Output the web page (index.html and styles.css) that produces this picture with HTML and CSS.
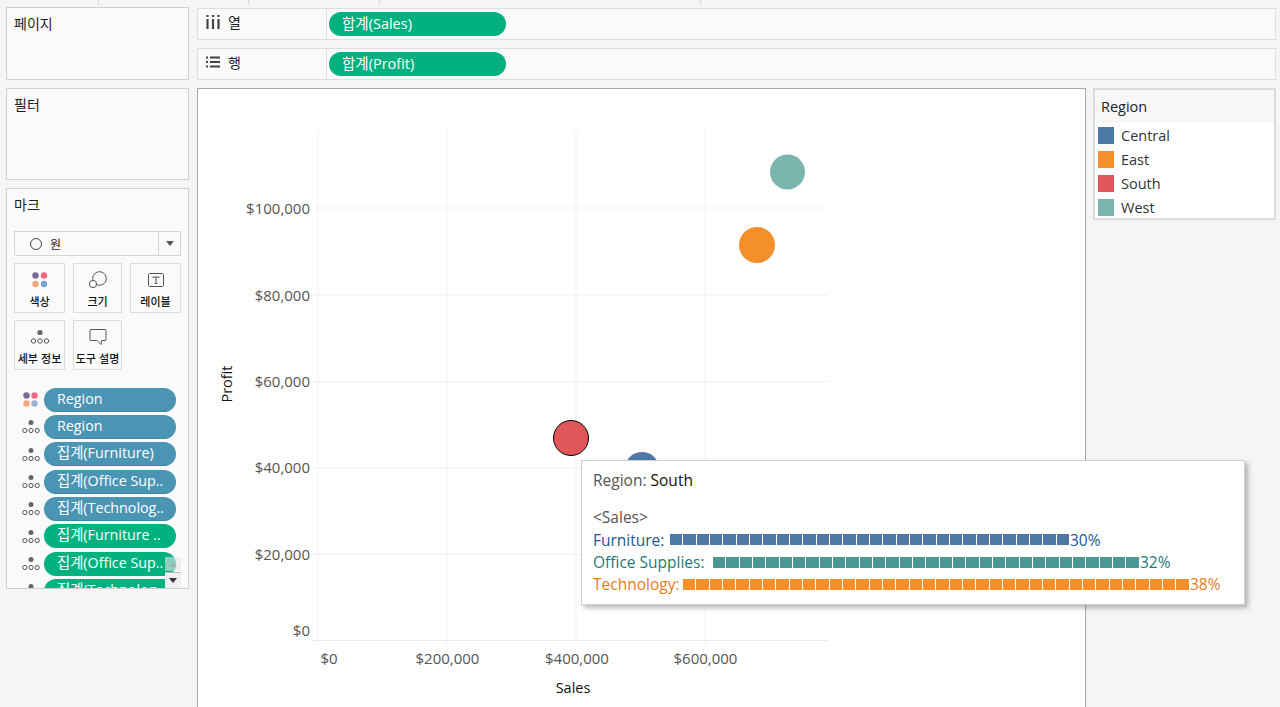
FILE: index.html
```html
<!DOCTYPE html>
<html lang="ko">
<head>
<meta charset="utf-8">
<title>Tableau</title>
<link rel="stylesheet" href="styles.css">
</head>
<body>
<div class="tabs"><span class="tab t1"></span><span class="tab t2"></span><span class="tab t3"></span><span class="tab t4"></span></div>
<div class="app">
  <aside class="side">
    <section class="card page-card"><h2>페이지</h2></section>
    <section class="card filter-card"><h2>필터</h2></section>
    <section class="card marks-card">
      <h2>마크</h2>
      <div class="select">
        <div class="select-main">
          <svg class="select-ico" width="14" height="14" viewBox="0 0 14 14"><circle cx="7" cy="7" r="5.5" fill="none" stroke="#444" stroke-width="1"/></svg>
          <span>원</span>
        </div>
        <div class="select-arrow"><i></i></div>
      </div>
      <div class="mark-btns">
        <div class="mark-btn">
          <svg width="20" height="18" viewBox="0 0 20 18"><circle cx="5.5" cy="4.5" r="3.2" fill="#7b6a95"/><circle cx="14" cy="4.5" r="3.2" fill="#ee6a80"/><circle cx="5.5" cy="13" r="3.2" fill="#f3a77c"/><circle cx="14" cy="13" r="3.2" fill="#7ba3cf"/></svg>
          <span>색상</span>
        </div>
        <div class="mark-btn">
          <svg width="20" height="18" viewBox="0 0 20 18"><circle cx="11.5" cy="7.5" r="6.8" fill="none" stroke="#555"/><circle cx="5" cy="13" r="3.6" fill="#fafafa" stroke="#555"/></svg>
          <span>크기</span>
        </div>
        <div class="mark-btn">
          <svg width="20" height="18" viewBox="0 0 20 18"><rect x="2.5" y="2.5" width="15" height="13" rx="1" fill="none" stroke="#555"/><path d="M7 6h6M10 6v6.500M8.600 12.500h2.800M7 6v1M13 6v1" fill="none" stroke="#555"/></svg>
          <span>레이블</span>
        </div>
        <div class="mark-btn">
          <svg width="20" height="18" viewBox="0 0 20 18"><circle cx="10" cy="4.500" r="2.600" fill="#666"/><circle cx="3.500" cy="13" r="2.200" fill="none" stroke="#555"/><circle cx="10" cy="13" r="2.200" fill="none" stroke="#555"/><circle cx="16.500" cy="13" r="2.200" fill="none" stroke="#555"/></svg>
          <span>세부 정보</span>
        </div>
        <div class="mark-btn">
          <svg width="20" height="18" viewBox="0 0 20 18"><path d="M3 1.500h14a1 1 0 0 1 1 1v9a1 1 0 0 1-1 1h-3.500l-.5 4-4-4H3a1 1 0 0 1-1-1v-9a1 1 0 0 1 1-1z" fill="none" stroke="#555"/></svg>
          <span>도구 설명</span>
        </div>
      </div>
      <ul class="fields">
        <li class="field"><svg class="fico" width="18" height="17" viewBox="0 0 18 17"><circle cx="4.500" cy="4.500" r="3.200" fill="#7b6a95"/><circle cx="12.500" cy="4.500" r="3.200" fill="#ee6a80"/><circle cx="4.500" cy="12.500" r="3.200" fill="#f3a77c"/><circle cx="12.500" cy="12.500" r="3.200" fill="#9ab0d3"/></svg><span class="pill blue">Region</span></li>
        <li class="field"><svg class="fico"><use href="#dots"/></svg><span class="pill blue">Region</span></li>
        <li class="field"><svg class="fico"><use href="#dots"/></svg><span class="pill blue">집계(Furniture)</span></li>
        <li class="field"><svg class="fico"><use href="#dots"/></svg><span class="pill blue">집계(Office Sup..</span></li>
        <li class="field"><svg class="fico"><use href="#dots"/></svg><span class="pill blue">집계(Technolog..</span></li>
        <li class="field"><svg class="fico"><use href="#dots"/></svg><span class="pill green">집계(Furniture ..</span></li>
        <li class="field"><svg class="fico"><use href="#dots"/></svg><span class="pill green">집계(Office Sup..</span></li>
        <li class="field"><svg class="fico"><use href="#dots"/></svg><span class="pill green">집계(Technolog..</span></li>
      </ul>
      <div class="scroller"><div class="sc-up"><i></i></div><div class="sc-down"><i></i></div></div>
    </section>
  </aside>
  <main class="main">
    <div class="shelf">
      <div class="shelf-label">
        <svg width="16" height="14" viewBox="0 0 16 14"><path d="M2.500 0v2M2.500 4v10M8 0v2M8 4v10M13.500 0v2M13.500 4v10" stroke="#444" stroke-width="2.200" fill="none"/></svg>
        <span>열</span>
      </div>
      <div class="shelf-drop"><span class="shelf-pill">합계(Sales)</span></div>
    </div>
    <div class="shelf">
      <div class="shelf-label">
        <svg width="16" height="14" viewBox="0 0 16 14"><path d="M1 2.500h2M5 2.500h10M1 7h2M5 7h10M1 11.500h2M5 11.500h10" stroke="#444" stroke-width="2" fill="none"/></svg>
        <span>행</span>
      </div>
      <div class="shelf-drop"><span class="shelf-pill">합계(Profit)</span></div>
    </div>
    <div class="stage">
      <div class="view">
        <svg class="chart" width="886" height="640" viewBox="198 89 886 640">
          <g class="grid">
            <path d="M318 130V645M447 130V645M576 130V645M705 130V645"/>
            <path d="M311 208H828M311 295H828M311 381.500H828M311 468H828M311 554.500H828"/>
            <path d="M311 640.500H828" class="base"/>
          </g>
          <g class="ylab">
            <text x="310" y="213.500">$100,000</text>
            <text x="310" y="300.500">$80,000</text>
            <text x="310" y="387">$60,000</text>
            <text x="310" y="473">$40,000</text>
            <text x="310" y="559.500">$20,000</text>
            <text x="310" y="636">$0</text>
          </g>
          <g class="xlab">
            <text x="329" y="664">$0</text>
            <text x="447.500" y="664">$200,000</text>
            <text x="577" y="664">$400,000</text>
            <text x="705.500" y="664">$600,000</text>
          </g>
          <text class="axis-title" x="573" y="693">Sales</text>
          <text class="axis-title" transform="translate(232 384) rotate(-90)">Profit</text>
          <circle cx="787.500" cy="172" r="17.500" fill="#7ab6ae"/>
          <circle cx="757" cy="245" r="18" fill="#f58f2c"/>
          <circle cx="642" cy="469.500" r="17.500" fill="#4e79a7"/>
          <circle cx="571" cy="438" r="17.500" fill="#e15759" stroke="#000" stroke-width="1"/>
        </svg>
        <div class="tip">
          <p class="tip-head"><span>Region:</span> <b>South</b></p>
          <p class="tip-sales">&lt;Sales&gt;</p>
          <p class="tip-row c-blue"><span class="w1">Furniture:</span><i class="bar" style="width:400px"></i><span>30%</span></p>
          <p class="tip-row c-teal"><span class="w2">Office Supplies:</span><i class="bar" style="width:427px"></i><span>32%</span></p>
          <p class="tip-row c-orange"><span class="w3">Technology:</span><i class="bar" style="width:507px"></i><span>38%</span></p>
        </div>
      </div>
      <div class="legend">
        <h3>Region</h3>
        <ul>
          <li><i class="sw s-blue"></i>Central</li>
          <li><i class="sw s-orange"></i>East</li>
          <li><i class="sw s-red"></i>South</li>
          <li><i class="sw s-teal"></i>West</li>
        </ul>
      </div>
    </div>
  </main>
</div>
<svg class="defs" width="0" height="0"><symbol id="dots" viewBox="0 0 18 17" width="18" height="17"><circle cx="9" cy="4.500" r="2.500" fill="#666"/><circle cx="2.800" cy="12.500" r="2.100" fill="none" stroke="#555"/><circle cx="9" cy="12.500" r="2.100" fill="none" stroke="#555"/><circle cx="15.200" cy="12.500" r="2.100" fill="none" stroke="#555"/></symbol></svg>
</body>
</html>
```
FILE: styles.css
```css
* { box-sizing: border-box; }
html, body { margin: 0; height: 707px; overflow: hidden; }
body {
  background: #f5f5f5;
  color: #1c1c1c;
  font-family: "Open Sans", "Noto Sans CJK KR", sans-serif;
  font-size: 14px;
}
h2, h3, p, ul { margin: 0; padding: 0; font-weight: 400; list-style: none; }

.tabs { display: flex; height: 5px; }
.tab { border-right: 1px solid #dcdcdc; }
.t1 { width: 99px; }
.t2 { width: 150px; }
.t3 { width: 131px; }
.t4 { width: 321px; }

.app { display: flex; gap: 8px; padding: 2px 4px 0 6px; }
.side { width: 183px; flex: none; display: flex; flex-direction: column; gap: 8px; }
.card { background: #fafafa; border: 1px solid #cfcfcf; padding: 5px 7px 0 7px; }
.card h2 { font-size: 14px; line-height: 20px; font-family: "Noto Sans CJK KR", sans-serif; }
.page-card { height: 73px; }
.filter-card { height: 92px; }
.marks-card { height: 401px; position: relative; overflow: hidden; }

.select { display: flex; height: 25px; margin-top: 17px; border: 1px solid #d4d4d4; background: #fafafa; border-radius: 1px; }
.select-main { flex: 1; display: flex; align-items: center; gap: 7px; padding-left: 14px; font: 12px "Noto Sans CJK KR", sans-serif; }
.select-arrow { width: 22px; border-left: 1px solid #d4d4d4; display: flex; align-items: center; justify-content: center; }
.select-arrow i { border: 4px solid transparent; border-top: 5px solid #555; border-bottom: 0; }

.mark-btns { display: grid; grid-template-columns: 51px 49px 51px; column-gap: 8px; row-gap: 7px; margin-top: 7px; }
.mark-btn { height: 50px; border: 1px solid #dcdcdc; background: #fafafa; display: flex; flex-direction: column; align-items: center; padding-top: 7px; }
.mark-btn svg { flex: none; }
.mark-btn span { font: 500 11px/14px "Noto Sans CJK KR", sans-serif; margin-top: 5px; white-space: nowrap; color: #111; }

.fields { margin-top: 16px; }
.field { display: flex; align-items: center; height: 27.33px; padding-left: 8px; gap: 4px; }
.fico { width: 18px; height: 17px; flex: none; }
.pill { width: 132px; height: 24px; border-radius: 12px; color: #fff; font-size: 14.300px; line-height: 22px; padding-left: 13px; white-space: nowrap; overflow: hidden; }
.blue { background: #4a95b3; border-bottom: 1px solid #3f84a1; }
.green { background: #00b180; }

.scroller { position: absolute; right: 7px; top: 368px; width: 16px; display: flex; flex-direction: column; gap: 1px; }
.sc-up { height: 14px; background: rgba(232, 232, 232, .6); display: flex; align-items: center; justify-content: center; }
.sc-down { height: 16px; background: #f0f0f0; border-top: 1px solid #bbb; display: flex; align-items: center; justify-content: center; }
.sc-up i { border: 4.500px solid transparent; border-bottom: 5px solid #9ab8b0; border-top: 0; }
.sc-down i { border: 4.500px solid transparent; border-top: 5px solid #334; border-bottom: 0; }

.main { flex: 1; min-width: 0; display: flex; flex-direction: column; gap: 8px; margin-top: 1px; }
.shelf { height: 32px; display: flex; background: #fafafa; border: 1px solid #dedede; }
.shelf-label { width: 129px; flex: none; border-right: 1px solid #dedede; display: flex; align-items: center; gap: 7px; padding: 0 0 4px 7px; font: 14px "Noto Sans CJK KR", sans-serif; }
.shelf-drop { flex: 1; padding: 3px 0 0 2px; }
.shelf-pill { display: block; width: 177px; height: 24px; border-radius: 12px; background: #00b180; color: #fff; font-size: 14.500px; line-height: 23px; padding-left: 13px; }

.stage { display: flex; gap: 7px; align-items: flex-start; }
.view { position: relative; width: 889px; height: 640px; flex: none; background: #fff; border: 1px solid #a8a8a8; }
.chart { display: block; font-size: 15px; }
.grid path { stroke: #f1f1f1; stroke-width: 1; fill: none; }
.grid .base { stroke: #ececec; }
.ylab text { fill: #555; text-anchor: end; }
.xlab text { fill: #555; text-anchor: middle; }
.axis-title { fill: #111; text-anchor: middle; font-size: 14.500px; }

.tip {
  position: absolute; left: 383px; top: 371px; width: 664px; height: 145px;
  background: #fff; border: 1px solid #d0d0d0; padding: 8px 0 0 11px;
  box-shadow: 3px 3px 5px rgba(0, 0, 0, .28);
  font-size: 15.500px; line-height: 22.300px; color: #555; white-space: nowrap;
}
.tip b { font-weight: 500; color: #111; font-size: 15.500px; }
.tip-sales { margin-top: 15px; }
.tip-row { display: flex; align-items: center; }
.w1 { width: 77px; }
.w2 { width: 120px; }
.w3 { width: 90px; }
.bar { display: block; height: 11px; }
.c-blue { color: #21578f; }
.c-teal { color: #1d7a77; }
.c-orange { color: #e97a18; }
.c-blue .bar { background: repeating-linear-gradient(90deg, #4e79a7 0 12.300px, transparent 12.300px 13.330px); }
.c-teal .bar { background: repeating-linear-gradient(90deg, #499893 0 12.300px, transparent 12.300px 13.330px); }
.c-orange .bar { background: repeating-linear-gradient(90deg, #f58f2c 0 12.300px, transparent 12.300px 13.330px); }

.legend { width: 183px; flex: none; background: #fff; border: 2px solid #dcdcdc; height: 132px; }
.legend h3 { height: 33px; background: #f7f7f7; font-size: 14.500px; line-height: 33px; padding-left: 6px; color: #222; }
.legend li { display: flex; align-items: center; height: 24px; gap: 7px; padding-left: 3px; font-size: 14.500px; color: #333; }
.sw { width: 16px; height: 17px; display: block; }
.s-blue { background: #4e79a7; }
.s-orange { background: #f58f2c; }
.s-red { background: #e15759; }
.s-teal { background: #7ab6ae; }
.defs { position: absolute; }
```
